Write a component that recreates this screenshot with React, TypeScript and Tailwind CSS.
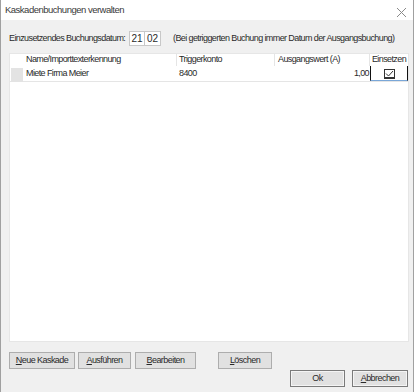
import React from "react";

const Btn = ({ children, w, focus }: { children: React.ReactNode; w: string; focus?: boolean }) => (
  <div
    className={`${w} h-[17px] flex items-center justify-center bg-[#e1e1e1] border ${
      focus ? "border-[#7a7a7a] shadow-[inset_0_0_0_1px_#f4f4f4]" : "border-[#adadad]"
    } text-[9px] text-[#2a2a2a] tracking-[-0.55px] whitespace-nowrap`}
  >
    {children}
  </div>
);

export default function App() {
  return (
    <div
      className="w-[414px] h-[392px] flex flex-col bg-[#f0f0f0] border-l border-r border-[#a0a0a0] overflow-hidden whitespace-nowrap"
      style={{ fontFamily: '"Liberation Sans", Arial, sans-serif' }}
    >
      <div className="h-[20px] shrink-0 bg-white flex items-center justify-between pl-[4px] pr-[6px]">
        <span className="text-[9.5px] text-[#3a3a3a] tracking-[-0.5px] mt-[1px]">Kaskadenbuchungen verwalten</span>
        <svg width="11" height="11" viewBox="0 0 11 11" className="mt-[4px]">
          <path d="M1 1 L10 10 M10 1 L1 10" stroke="#8a8a8a" strokeWidth="1" fill="none" />
        </svg>
      </div>
      <div className="flex flex-col px-[8px]">
        <div className="mt-[11px] h-[15px] flex items-center text-[9px] text-[#2a2a2a] tracking-[-0.6px]">
          <span className="w-[114px]">Einzusetzendes Buchungsdatum:</span>
          <div className="ml-[6px] flex">
            <div className="w-[16px] h-[15px] bg-white border border-[#c8c8c8] flex items-center justify-center tracking-normal text-[10px]">21</div>
            <div className="w-[16px] h-[15px] bg-white border border-l-0 border-[#c8c8c8] flex items-center justify-center tracking-normal text-[10px]">02</div>
          </div>
          <span className="ml-[12px]">(Bei getriggerten Buchung immer Datum der Ausgangsbuchung)</span>
        </div>
        <div className="mt-[7px] w-[400px] h-[289px] bg-white border border-[#e6e6e6] flex flex-col text-[9px] text-[#2a2a2a] tracking-[-0.6px]">
          <div className="h-[12px] flex">
            <div className="w-[167px] h-full flex items-center pl-[16px] border-r border-[#e5e5e5]">Name/Importtexterkennung</div>
            <div className="w-[98px] h-full flex items-center pl-[2px] border-r border-[#e5e5e5]">Triggerkonto</div>
            <div className="w-[95px] h-full flex items-center pl-[3px] border-r border-[#e5e5e5]">Ausgangswert (A)</div>
            <div className="flex-1 h-full flex items-center justify-center">Einsetzen</div>
          </div>
          <div className="h-[16px] flex border-b border-[#e5e5e5]">
            <div className="w-[167px] h-full flex items-center">
              <div className="ml-[1px] w-[12px] h-[14px] mt-[2px] bg-[#e3e3e3]" />
              <span className="ml-[3px]">Miete Firma Meier</span>
            </div>
            <div className="w-[98px] h-full flex items-center pl-[2px]">8400</div>
            <div className="w-[95px] h-full flex items-center justify-end pr-[1px]">1,00</div>
            <div className="flex-1 h-full flex items-end justify-center border-l border-r border-[#111] border-b-[#7aa7d8] border-b">
              <div className="w-[11px] h-[10px] mb-[1px] bg-white border border-[#333] border-b-2 flex items-center justify-center">
                <svg width="9" height="7" viewBox="0 0 9 7">
                  <path d="M1 3.5 L3.5 6 L8 1" stroke="#333" strokeWidth="1" fill="none" />
                </svg>
              </div>
            </div>
          </div>
        </div>
        <div className="mt-[10px] flex">
          <Btn w="w-[66px]"><span><u>N</u>eue Kaskade</span></Btn>
          <div className="ml-[3px]"><Btn w="w-[53px]"><span><u>A</u>usführen</span></Btn></div>
          <div className="ml-[4px]"><Btn w="w-[61px]"><span><u>B</u>earbeiten</span></Btn></div>
          <div className="ml-[22px]"><Btn w="w-[54px]"><span><u>L</u>öschen</span></Btn></div>
        </div>
        <div className="mt-[1px] flex">
          <div className="ml-[281px]"><Btn w="w-[55px]" focus>Ok</Btn></div>
          <div className="ml-[7px]"><Btn w="w-[56px]" focus><span><u>A</u>bbrechen</span></Btn></div>
        </div>
      </div>
    </div>
  );
}
